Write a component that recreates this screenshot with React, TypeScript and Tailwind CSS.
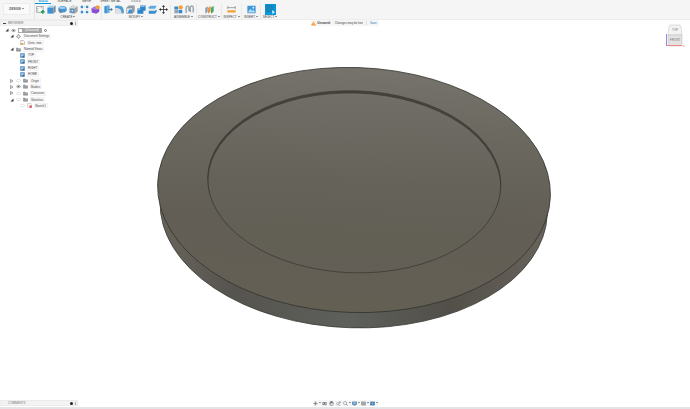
import React from "react";

type Kind =
  | "sketch" | "box" | "form" | "revolve" | "pattern" | "purple"
  | "press" | "fillet" | "shell" | "combine" | "split" | "move"
  | "component" | "joint" | "plane" | "measure" | "insert" | "select"
  | "gear" | "doc" | "folder" | "view" | "bulb" | "eye" | "sketchItem" | "file" | "warn"
  | "orbit" | "look" | "pan" | "zoomIn" | "zoomFit" | "display" | "grid" | "viewports";

const shapes: Record<Kind, React.ReactNode> = {
  sketch: (<><rect x="2" y="4" width="17" height="16" fill="#fafafa" stroke="#7d868d" strokeWidth="1.600" /><path d="M2 9h5M2 15h5M14 4v5" stroke="#7d868d" strokeWidth="1.500" /><path d="M18 13v10M13 18h10" stroke="#22a14a" strokeWidth="4" /></>),
  box: (<><path d="M1 7l5-6h17l-5 6z" fill="#a9d4f2" /><path d="M1 7h16v16H1z" fill="#3d92d5" /><path d="M17 7l6-6v16l-6 6z" fill="#7d8891" /></>),
  form: (<><path d="M1 8c4-7 18-7 22 0v7c-5 7-17 7-22 0z" fill="#3f95d8" /><path d="M2 7c5-5 15-4 20 1-6 4-14 4-20-1z" fill="#a2cff0" /><path d="M1 14h9v7H5z" fill="#6f8494" /></>),
  revolve: (<><path d="M1 8l8-7 14 3v13l-8 6-14-2z" fill="#9aa4ab" /><path d="M1 8l8-7 14 3-8 5z" fill="#d6dadd" /><circle cx="9" cy="15" r="5" fill="#2d83c6" /><circle cx="9" cy="15" r="2.500" fill="#edf3f7" /></>),
  pattern: (<><path d="M5 5h14v14H5z" fill="none" stroke="#84b4d8" strokeWidth="1.500" strokeDasharray="3 2" /><path d="M2 2h6v6H2zM2 16h6v6H2zM16 16h6v6h-6zM16 2h6v6h-6z" fill="#368dd1" /></>),
  purple: (<><path d="M1 9l9-5 12 4v10l-8 5-12-3z" fill="#8a4fd0" /><path d="M1 9l9-5 12 4-8 5z" fill="#a87ce2" /><circle cx="18" cy="6" r="5.500" fill="#f1a33a" /></>),
  press: (<><path d="M1 3h8v19H1z" fill="#3790d4" /><path d="M7 1h8v20H7z" fill="#66aee2" /><path d="M12 12h10M18 8l4 4-4 4" fill="none" stroke="#54728a" strokeWidth="2.500" /></>),
  fillet: (<><path d="M1 2h8c9 0 14 5 14 14v6H1z" fill="#9aa5ad" /><path d="M1 2h8c9 0 14 5 14 14v6h-5C18 12 13 8 1 8z" fill="#4b9dd9" /><path d="M1 8c11 0 16 5 16 14H1z" fill="#dce1e4" /></>),
  shell: (<><path d="M1 7l6-6h16v16l-6 6H1z" fill="#909ba3" /><path d="M3 9h13v12H3z" fill="#e9eff3" /><path d="M8 12h8v9H5z" fill="#3b91d4" /></>),
  combine: (<><path d="M8 1h15v14h-6v8H1V9h7z" fill="#2e86ca" /><path d="M8 1h15l-4 4H8zM1 9h9l-3 4H1z" fill="#80bce7" /></>),
  split: (<><path d="M2 6l4-4h17l-4 8H2z" fill="#61a8dc" /><path d="M1 11h22v3H1z" fill="#e3edf3" /><path d="M2 15h17l4-3v6l-4 5H2z" fill="#3c8fcf" /></>),
  move: (<path d="M12 0l4 5h-3v6h6V8l5 4-5 4v-3h-6v6h3l-4 5-4-5h3v-6H5v3l-5-4 5-4v3h6V5H8z" fill="#26292c" />),
  component: (<><path d="M1 4h10v8H1zM12 13h10v9H12z" fill="#328acf" /><path d="M1 13h10v9H1z" fill="#96a4ad" /><path d="M12 5h10v7H12z" fill="#a6c8e2" /><circle cx="18" cy="6" r="5.500" fill="#f4a12e" /></>),
  joint: (<><path d="M3 21V8c0-6 8-6 8 0v9M14 17V7c0-6 8-6 8 0v13" fill="none" stroke="#a0aab1" strokeWidth="4" /><path d="M9 10l7 9" stroke="#7c8790" strokeWidth="2" /></>),
  plane: (<><path d="M1 8l6-5v15l-6 5z" fill="#8b969e" /><path d="M8 8l7-6v15l-7 6z" fill="#ee914c" /><path d="M16 7l7-5v15l-7 6z" fill="#39ad67" /></>),
  measure: (<><path d="M2 7h20M2 3v8M22 3v8" stroke="#606a71" strokeWidth="1.500" /><path d="M1 14h22v6H1z" fill="#eda234" /></>),
  insert: (<><path d="M1 2h22v20H1z" fill="#3c96d9" /><path d="M2 20l7-10 5 6 3-4 5 8z" fill="#b9dbf0" /><circle cx="17" cy="7" r="2.500" fill="#e7f5ff" /></>),
  select: (<><path d="M0 0h24v24H0z" fill="#0696d7" /><path d="M4 4h12v12H4z" fill="#1a87bd" stroke="#22617f" strokeWidth="1" strokeDasharray="2 1" /><path d="M15 13l7 5-3 1-2 4z" fill="#e9f7ff" /></>),
  gear: (<><circle cx="12" cy="12" r="7" fill="none" stroke="#777" strokeWidth="3" /><path d="M12 1v5M12 18v5M1 12h5M18 12h5" stroke="#777" strokeWidth="3" /></>),
  doc: (<><path d="M4 2h12l5 5v15H4z" fill="#fff" stroke="#666" strokeWidth="2" /><path d="M2 15h13v7H2z" fill="#eba338" /></>),
  folder: (<><path d="M1 4h8l3 3h11v14H1z" fill="#85898c" /><path d="M3 10h18M9 10v9M15 10v9" stroke="#c8cbcd" strokeWidth="2" /></>),
  view: (<><path d="M1 1h22v22H1z" fill="#5a8fbc" /><path d="M5 6h13v10H5z" fill="#a6cce8" /><path d="M9 20l11-11v11z" fill="#35699a" /></>),
  bulb: (<ellipse cx="12" cy="12" rx="10" ry="6" fill="#fff" stroke="#c0c2c3" strokeWidth="2" />),
  eye: (<><ellipse cx="12" cy="12" rx="10" ry="6" fill="#e8e8e8" stroke="#777" strokeWidth="2" /><circle cx="12" cy="12" r="4" fill="#555" /></>),
  sketchItem: (<><path d="M3 3h17v17H3z" fill="#fff" stroke="#777" strokeWidth="2" strokeDasharray="5 2" /><path d="M12 12h11v11H12z" fill="#dd444c" /></>),
  file: (<path d="M3 2h12l6 6v14H3z" fill="#fff" stroke="#777" strokeWidth="2" />),
  warn: (<><path d="M12 1l12 21H0z" fill="#f29b24" /><path d="M12 8v7M12 17v3" stroke="#fff" strokeWidth="2.500" /></>),
  orbit: (<><path d="M12 2v20M2 12h20" stroke="#59636b" strokeWidth="2.500" /><circle cx="12" cy="12" r="6" fill="none" stroke="#7a848c" strokeWidth="2" /></>),
  look: (<><path d="M2 5h20v15H2z" fill="#7c858b" /><path d="M5 9h14v7H5z" fill="#c6cdd1" /><circle cx="12" cy="12" r="3" fill="#555e65" /></>),
  pan: (<path d="M5 20L3 9l4 3V4h3v6V2h3v8V3h3v8l4-4v9l-4 6z" fill="#f3f3f3" stroke="#4f565c" strokeWidth="2.500" />),
  zoomIn: (<><circle cx="9" cy="13" r="6" fill="#fff" stroke="#6a737a" strokeWidth="2.500" /><path d="M13 17l6 6M19 2v9M15 6h8" stroke="#59636b" strokeWidth="2.500" /></>),
  zoomFit: (<><circle cx="10" cy="10" r="8" fill="#edf5fa" stroke="#76838c" strokeWidth="2.500" /><path d="M16 16l6 6" stroke="#438bc0" strokeWidth="4" /></>),
  display: (<><path d="M1 3h22v15H1z" fill="#3675a9" /><path d="M5 6h14v8H5z" fill="#8fc0e1" /><path d="M7 21h10" stroke="#69737b" strokeWidth="3" /></>),
  grid: (<><path d="M1 3h22v18H1z" fill="#838c92" /><path d="M2 9h20M2 15h20M8 4v16M16 4v16" stroke="#d7dcdf" strokeWidth="1.500" /></>),
  viewports: (<><path d="M1 3h22v18H1z" fill="#3978ac" /><path d="M3 12h18M12 4v16" stroke="#a8cbe4" strokeWidth="2" /></>),
};

function Icon({ kind, className = "size-[5px]" }: { kind: Kind; className?: string }) {
  return <svg viewBox="0 0 24 24" className={`shrink-0 ${className}`} aria-hidden="true">{shapes[kind]}</svg>;
}

function Caret() {
  return <svg viewBox="0 0 6 4" className="w-[2px] shrink-0" aria-hidden="true"><path d="M0 0h6L3 4z" fill="#555" /></svg>;
}

const groups: { label: string; width: string; icons: Kind[]; line: boolean }[] = [
  { label: "CREATE", width: "w-[67px]", icons: ["sketch", "box", "form", "revolve", "pattern", "purple"], line: true },
  { label: "MODIFY", width: "w-[69px]", icons: ["press", "fillet", "shell", "combine", "split", "move"], line: true },
  { label: "ASSEMBLE", width: "w-[26px]", icons: ["component", "joint"], line: true },
  { label: "CONSTRUCT", width: "w-[25px]", icons: ["plane"], line: true },
  { label: "INSPECT", width: "w-[20px]", icons: ["measure"], line: true },
  { label: "INSERT", width: "w-[19px]", icons: ["insert"], line: true },
  { label: "SELECT", width: "w-[18px]", icons: ["select"], line: false },
];

const tabs = [
  { name: "SOLID", width: "w-[16px]" },
  { name: "SURFACE", width: "w-[27px]" },
  { name: "MESH", width: "w-[17px]" },
  { name: "SHEET METAL", width: "w-[31px]" },
  { name: "TOOLS", width: "w-[19px]" },
];

function Toolbar() {
  return (
    <header className="flex h-[20px] shrink-0 overflow-hidden border-b border-[#ededed] bg-[#f5f5f5]">
      <div className="w-[35px] shrink-0 border-r border-[#e3e3e3] pt-[3px] pl-[3px]">
        <button className="flex h-[12px] w-[27px] items-center justify-center gap-px border border-[#ececec] bg-[#fafafa] font-bold text-[#555]">DESIGN <Caret /></button>
      </div>
      <div>
        <nav className="flex h-[4px]">
          {tabs.map((t, i) => (
            <button key={t.name} className={`flex h-[4px] shrink-0 items-start justify-center whitespace-nowrap leading-[3px] ${t.width} ${i === 0 ? "border-b border-[#0696d7] font-bold text-[#0696d7]" : ""}`}>{t.name}</button>
          ))}
        </nav>
        <div className="flex">
          {groups.map((g) => (
            <section key={g.label} className={`flex h-[15px] shrink-0 flex-col items-center ${g.width} ${g.line ? "border-r border-[#e9e9e9]" : ""}`}>
              <div className="flex h-[11px] items-center">
                {g.icons.map((k) => (
                  <button key={k} aria-label={k} className="flex w-[11px] justify-center"><Icon kind={k} className={k === "select" ? "size-[11px]" : "size-[9px]"} /></button>
                ))}
              </div>
              <button className="flex h-[4px] items-center gap-px whitespace-nowrap">{g.label} <Caret /></button>
            </section>
          ))}
        </div>
      </div>
    </header>
  );
}

type Row = { label: string; pad: string; arrow?: "open" | "closed"; icons: Kind[]; root?: boolean };
const rows: Row[] = [
  { label: "(Unsaved)", pad: "pl-[5px]", arrow: "open", icons: ["eye"], root: true },
  { label: "Document Settings", pad: "pl-[10px]", arrow: "open", icons: ["gear"] },
  { label: "Units: mm", pad: "pl-[20px]", icons: ["doc"] },
  { label: "Named Views", pad: "pl-[10px]", arrow: "open", icons: ["folder"] },
  { label: "TOP", pad: "pl-[20px]", icons: ["view"] },
  { label: "FRONT", pad: "pl-[20px]", icons: ["view"] },
  { label: "RIGHT", pad: "pl-[20px]", icons: ["view"] },
  { label: "HOME", pad: "pl-[20px]", icons: ["view"] },
  { label: "Origin", pad: "pl-[10px]", arrow: "closed", icons: ["bulb", "folder"] },
  { label: "Bodies", pad: "pl-[10px]", arrow: "closed", icons: ["eye", "folder"] },
  { label: "Canvases", pad: "pl-[10px]", arrow: "closed", icons: ["bulb", "folder"] },
  { label: "Sketches", pad: "pl-[10px]", arrow: "open", icons: ["bulb", "folder"] },
  { label: "Sketch1", pad: "pl-[20px]", icons: ["bulb", "sketchItem"] },
];

function TreeRow({ row }: { row: Row }) {
  return (
    <li className={`flex flex-1 items-center gap-[2px] ${row.pad}`}>
      {row.arrow && (
        <svg viewBox="0 0 8 8" className="size-[4px] shrink-0" aria-hidden="true">
          {row.arrow === "open" ? <path d="M7 1v6H1z" fill="#333" /> : <path d="M1 1l5 3-5 3z" fill="#fff" stroke="#444" />}
        </svg>
      )}
      {row.icons.map((k) => <Icon key={k} kind={k} />)}
      {row.root ? (
        <span className="flex h-[5px] items-center gap-[2px] bg-[#a5a5a5] pr-[3px] whitespace-nowrap text-white"><Icon kind="file" />{row.label}</span>
      ) : (
        <span className="flex h-[5px] items-center border border-[#f3f3f3] bg-[#fafafa] pr-px whitespace-nowrap">{row.label}</span>
      )}
      {row.root && <span className="size-[3px] rounded-full border border-[#777]" />}
    </li>
  );
}

function PanelBar({ title, collapse }: { title: string; collapse?: boolean }) {
  return (
    <div className="flex h-[6px] w-[78px] items-center border border-[#ececec] bg-[#f3f3f3] pr-px pl-[2px] text-[#777]">
      <span className="flex w-[5px]">{collapse && <span className="h-px w-[3px] bg-[#444]" />}</span>
      <span className="flex-1">{title}</span>
      <span className="size-[3px] rounded-full bg-[#222]" />
      <span className="ml-[2px] h-[3px] w-px bg-[#aaa]" />
    </div>
  );
}

function Model() {
  return (
    <svg viewBox="0 20 690 387" className="absolute inset-0 size-full" role="img" aria-label="Round plate with a recess">
      <defs>
        <linearGradient id="face" x1="0" y1="0" x2="0" y2="1">
          <stop offset="0" stopColor="#75736b" /><stop offset=".3" stopColor="#69675e" /><stop offset=".62" stopColor="#625e56" /><stop offset="1" stopColor="#645f53" />
        </linearGradient>
        <linearGradient id="floor" x1="0" y1="0" x2="0" y2="1">
          <stop offset="0" stopColor="#706e66" /><stop offset=".5" stopColor="#65625a" /><stop offset=".8" stopColor="#626055" /><stop offset="1" stopColor="#635e56" />
        </linearGradient>
        <linearGradient id="side" x1="0" y1="0" x2="1" y2="0">
          <stop offset="0" stopColor="#66645a" /><stop offset=".2" stopColor="#56544e" /><stop offset=".5" stopColor="#5d605b" /><stop offset=".75" stopColor="#524f49" /><stop offset="1" stopColor="#68635b" />
        </linearGradient>
        <clipPath id="recess"><ellipse cx="354.300" cy="181.800" rx="146.700" ry="91" transform="rotate(1.900 354.300 181.800)" /></clipPath>
      </defs>
      <ellipse cx="353.700" cy="207.500" rx="193.700" ry="120.300" transform="rotate(1.900 353.700 207.500)" fill="url(#side)" stroke="#3c3b37" strokeWidth=".8" />
      <ellipse cx="354" cy="190" rx="196.500" ry="122.500" transform="rotate(1.900 354 190)" fill="url(#face)" stroke="#33322e" strokeWidth=".8" />
      <g clipPath="url(#recess)">
        <path d="M200 80h310v200H200z" fill="#45433d" />
        <ellipse cx="354.300" cy="184" rx="146.500" ry="91" transform="rotate(1.900 354.300 184)" fill="url(#floor)" stroke="#35332f" strokeWidth=".6" />
      </g>
      <ellipse cx="354.300" cy="181.800" rx="146.700" ry="91" transform="rotate(1.900 354.300 181.800)" fill="none" stroke="#3a3934" strokeWidth=".7" />
    </svg>
  );
}

function ViewCube() {
  return (
    <svg viewBox="0 0 20 28" className="mr-[5px] h-[28px] w-[20px]" role="img" aria-label="View cube">
      <path d="M4 7l1-2h10l1 2 1 8H3z" fill="#f3f3f3" stroke="#ccc" strokeWidth=".6" />
      <path d="M3 15h14v9l-1 2H4l-1-2z" fill="#e2e2e2" stroke="#c4c4c4" strokeWidth=".6" />
      <path d="M1.500 14v12" stroke="#8c8ce8" />
      <path d="M2 25.500h15" stroke="#ec8a8a" />
      <text x="10" y="11" textAnchor="middle" fontSize="3" fill="#777">TOP</text>
      <text x="10" y="20.500" textAnchor="middle" fontSize="3" fill="#777">FRONT</text>
      <text x="17.500" y="26.500" fontSize="4" fill="#e66">x</text>
    </svg>
  );
}

const navTools: { kind: Kind; menu: boolean }[] = [
  { kind: "orbit", menu: true }, { kind: "look", menu: false }, { kind: "pan", menu: false }, { kind: "zoomIn", menu: false },
  { kind: "zoomFit", menu: true }, { kind: "display", menu: true }, { kind: "grid", menu: true }, { kind: "viewports", menu: true },
];

export default function App() {
  return (
    <div className="flex min-h-screen flex-col bg-white font-['Liberation_Sans',Arial,sans-serif] text-[3px] leading-[4px] text-[#444]">
      <Toolbar />
      <main className="relative flex flex-1 flex-col border-b-2 border-[#e2e4e6]">
        <Model />
        <div className="relative grid flex-1 grid-cols-[1fr_auto_1fr] items-start">
          <aside>
            <PanelBar title="BROWSER" collapse />
            <ul className="flex h-[83px] w-[90px] flex-col pt-px">
              {rows.map((r) => <TreeRow key={r.label} row={r} />)}
            </ul>
          </aside>
          <div className="flex h-[6px] items-center gap-px bg-[#f6f6f6] whitespace-nowrap">
            <Icon kind="warn" />
            <strong>Unsaved:</strong>
            <span className="border-r border-[#ddd] px-[3px]">Changes may be lost</span>
            <button className="px-[2px] text-[#327eae]">Save</button>
          </div>
          <div className="flex justify-end"><ViewCube /></div>
        </div>
        <footer className="relative grid h-[8px] grid-cols-[1fr_auto_1fr] items-center">
          <PanelBar title="COMMENTS" />
          <div className="flex h-[6px] items-center gap-px bg-[#f7f7f7]">
            {navTools.map((t) => (
              <button key={t.kind} aria-label={t.kind} className="flex items-center gap-px"><Icon kind={t.kind} />{t.menu ? <Caret /> : <span />}</button>
            ))}
          </div>
          <span />
        </footer>
      </main>
    </div>
  );
}
